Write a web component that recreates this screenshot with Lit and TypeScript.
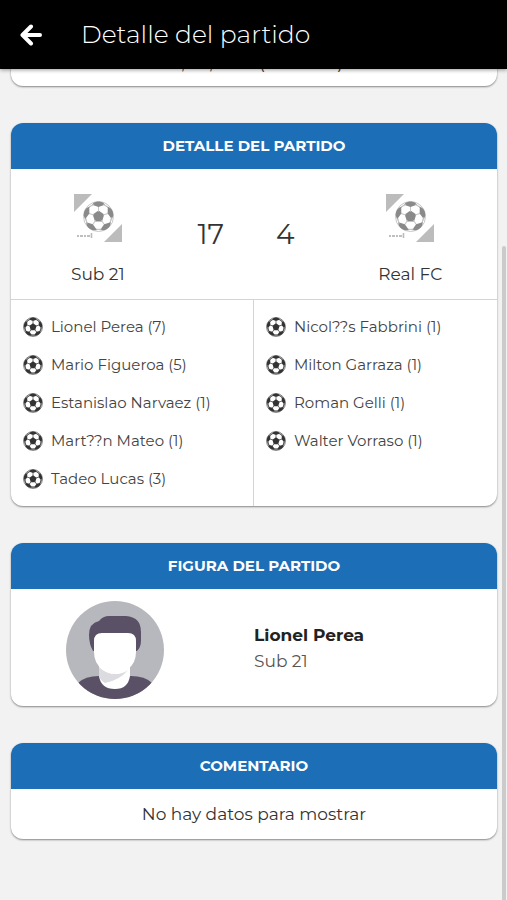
import { LitElement, html, css, svg } from "lit";
import { customElement } from "lit/decorators.js";

const spokes = [0, 72, 144, 216, 288];

const ballPattern = (dark: string, line: string, width: number) => svg`
  <circle cx="50" cy="50" r="47" fill="#fff" stroke=${line} stroke-width=${width}></circle>
  <path d="M50 31 L68 44 L61 66 H39 L32 44Z" fill=${dark}></path>
  ${spokes.map(
    (a) => svg`<g transform="rotate(${a} 50 50)">
      <path d="M50 35 V19 M32 12 L19 24 M68 12 L81 24" fill="none" stroke=${line} stroke-width=${width}></path>
      <path d="M50 20 L30 13 Q36 3 50 3 Q64 3 70 13Z" fill=${dark}></path>
    </g>`
  )}`;

@customElement("ball-icon")
class BallIcon extends LitElement {
  static styles = css`
    :host { display: block; flex: none; width: 20px; height: 20px; }
    svg { display: block; width: 100%; height: 100%; }
  `;
  render() {
    return html`<svg viewBox="0 0 100 100" aria-hidden="true">${ballPattern("#333", "#555", 4)}</svg>`;
  }
}

@customElement("team-crest")
class TeamCrest extends LitElement {
  static styles = css`
    :host { display: block; width: 48px; height: 48px; }
    svg { display: block; width: 100%; height: 100%; }
  `;
  render() {
    return html`<svg viewBox="0 0 48 48" aria-hidden="true">
      <path d="M0 0H18L0 18Z M48 30V48H30Z" fill="#bcbcbc"></path>
      <g transform="translate(8.500 6.500) scale(.32)">${ballPattern("#8a8a8a", "#c4c4c4", 3)}</g>
      <path d="M3 42h2m1 0h3m1 0h2m1 0h3" stroke="#aaa" stroke-width="1.4"></path>
      <path d="M17.500 39v5" stroke="#bbb" stroke-width="1.600"></path>
    </svg>`;
  }
}

@customElement("info-card")
class InfoCard extends LitElement {
  static properties = { heading: { type: String } };
  declare heading: string;
  static styles = css`
    :host {
      display: block;
      overflow: hidden;
      background: #fff;
      border-radius: 12px;
      box-shadow: 0 1px 2px rgba(0, 0, 0, 0.45);
    }
    h2 {
      margin: 0;
      background: #1c6fb7;
      color: #fff;
      font-size: 15px;
      font-weight: 700;
      line-height: 46px;
      text-align: center;
    }
  `;
  render() {
    return html`<h2>${this.heading}</h2><slot></slot>`;
  }
}

@customElement("app-root")
class AppRoot extends LitElement {
  static styles = css`
    :host {
      display: block;
      min-height: 100vh;
      background: #f2f2f2;
      color: #333;
      font-family: Montserrat, Inter, "Open Sans", sans-serif;
    }
    header {
      position: sticky;
      top: 0;
      z-index: 1;
      display: flex;
      align-items: center;
      gap: 38px;
      padding: 0 20px;
      background: #000;
      color: #fff;
      box-shadow: 0 1px 4px rgba(0, 0, 0, 0.4);
    }
    .back { display: flex; padding: 0; border: 0; background: none; color: inherit; }
    h1 { margin: 0; font-size: 25px; font-weight: 300; line-height: 69px; }
    main { display: grid; gap: 37px; padding: 0 10px 37px 11px; }
    .previous {
      display: grid;
      grid-template-columns: 28px 50px 78px auto;
      justify-content: center;
      margin-top: -18px;
      padding: 0 0 11px 16px;
      border-radius: 0 0 12px 12px;
      background: #fff;
      box-shadow: 0 1px 2px rgba(0, 0, 0, 0.45);
      font-size: 17px;
      line-height: 24px;
    }
    .match { display: grid; grid-template-columns: 5fr 4fr 5fr; align-items: center; height: 130px; border-bottom: 1px solid #d4d4d4; }
    .team { display: grid; justify-items: center; gap: 20px; padding-top: 12px; font-size: 17px; line-height: 24px; }
    .score { display: flex; justify-content: center; gap: 52px; padding-right: 16px; font-size: 28px; line-height: 32px; }
    .scorers { display: grid; grid-template-columns: 1fr 1fr; }
    ul { margin: 0; padding: 8px 12px; list-style: none; }
    ul:first-child { border-right: 1px solid #d4d4d4; }
    li { display: flex; align-items: center; gap: 8px; font-size: 15px; line-height: 38px; color: #444; white-space: nowrap; }
    .player { display: grid; grid-template-columns: 1fr 1fr; align-items: center; padding: 12px 0 7px; }
    .avatar { justify-self: center; display: block; width: 98px; height: 98px; margin-right: 36px; }
    .bio { padding-bottom: 4px; }
    .name { font-size: 17px; line-height: 26px; font-weight: 700; color: #222; }
    .club { font-size: 17px; line-height: 26px; color: #555; }
    p { margin: 0; }
    .comment { font-size: 17px; line-height: 50px; text-align: center; }
    .thumb { position: fixed; z-index: 2; top: 246px; right: 1px; bottom: 0; width: 4px; border-radius: 2px 2px 0 0; background: #cbcbcb; }
  `;

  home = ["Lionel Perea (7)", "Mario Figueroa (5)", "Estanislao Narvaez (1)", "Mart??n Mateo (1)", "Tadeo Lucas (3)"];
  away = ["Nicol??s Fabbrini (1)", "Milton Garraza (1)", "Roman Gelli (1)", "Walter Vorraso (1)"];

  scorers(names: string[]) {
    return html`<ul>${names.map((n) => html`<li><ball-icon></ball-icon>${n}</li>`)}</ul>`;
  }

  render() {
    return html`
      <header>
        <button class="back" aria-label="Volver">
          <svg width="23" height="22" viewBox="0 0 23 22" fill="none" stroke="currentColor" stroke-width="4" stroke-linecap="round" stroke-linejoin="round">
            <path d="M11 2.500L2.500 11L11 19.500M4 11H20"></path>
          </svg>
        </button>
        <h1>Detalle del partido</h1>
      </header>
      <main>
        <div class="previous"><span>,</span><span>,</span><span>(</span><span>)</span></div>
        <info-card heading="DETALLE DEL PARTIDO">
          <div class="match">
            <div class="team"><team-crest></team-crest>Sub 21</div>
            <div class="score"><span>17</span><span>4</span></div>
            <div class="team"><team-crest></team-crest>Real FC</div>
          </div>
          <div class="scorers">${this.scorers(this.home)}${this.scorers(this.away)}</div>
        </info-card>
        <info-card heading="FIGURA DEL PARTIDO">
          <div class="player">
            <svg class="avatar" viewBox="0 0 98 98" aria-hidden="true">
              <defs><clipPath id="disc"><circle cx="49" cy="49" r="49"></circle></clipPath></defs>
              <g clip-path="url(#disc)">
                <rect width="98" height="98" fill="#b7b8bd"></rect>
                <path d="M12 82Q19 75 33 75H65Q79 75 86 82V98H12Z" fill="#5b5167"></path>
                <path d="M33 65H64V75Q62 88 49 88Q35 88 33 75Z" fill="#fff"></path>
                <path d="M33 66Q40 73 49 73Q57 73 62 69Q54 79 39 82Q34 79 33 75Z" fill="#dcdce0"></path>
                <path d="M27 50Q23 43 23 34Q23 22 33 20Q37 15 43 15H60Q75 16 75 31V40Q75 46 71 50Z" fill="#5b5167"></path>
                <path d="M28 40Q28 32 36 32H62Q70 32 70 40V51Q70 62 62 68Q56 73 49 73Q42 73 36 68Q28 62 28 51Z" fill="#fff"></path>
              </g>
            </svg>
            <div class="bio">
              <p class="name">Lionel Perea</p>
              <p class="club">Sub 21</p>
            </div>
          </div>
        </info-card>
        <info-card heading="COMENTARIO"><p class="comment">No hay datos para mostrar</p></info-card>
      </main>
      <div class="thumb"></div>
    `;
  }
}
